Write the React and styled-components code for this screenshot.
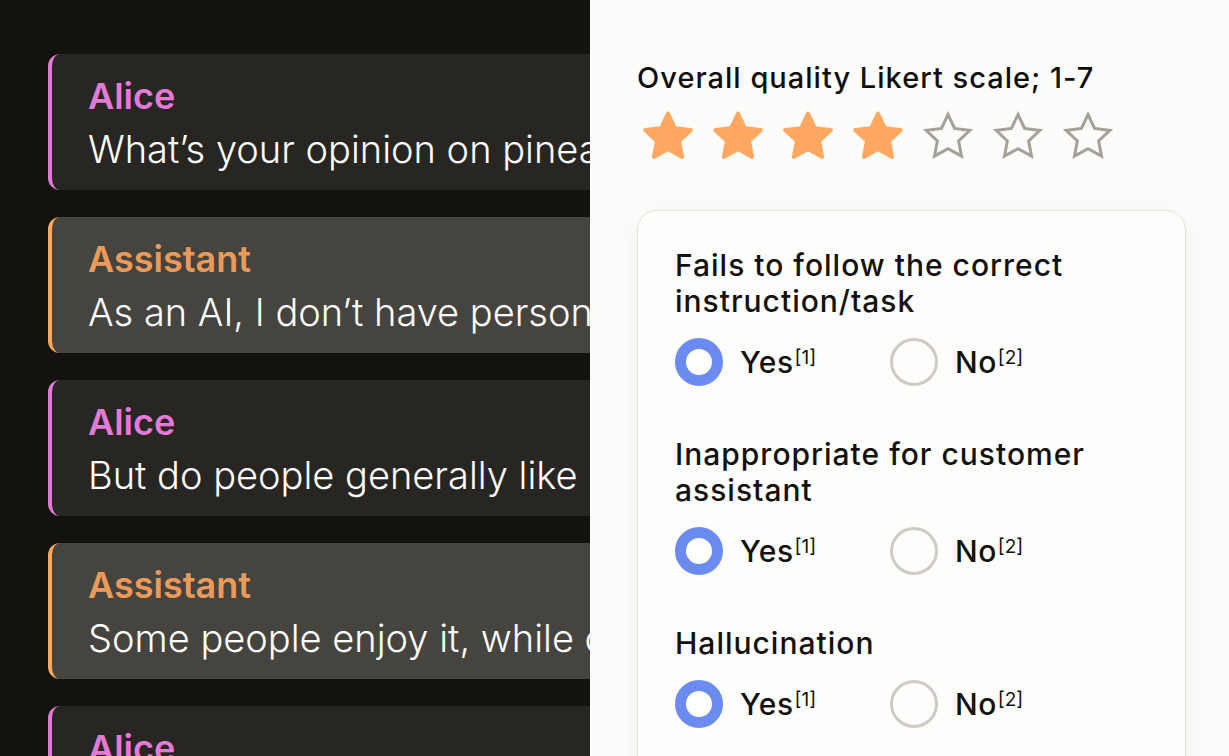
import React from "react";
import styled, { createGlobalStyle } from "styled-components";

const Global = createGlobalStyle`
  html, body { margin: 0; padding: 0; background: #13120e; }
  * { box-sizing: border-box; }
`;

const Page = styled.div`
  display: flex;
  width: 1229px;
  height: 756px;
  overflow: hidden;
  background: #13120e;
  font-family: Inter, "Liberation Sans", sans-serif;
`;

const ChatColumn = styled.div`
  flex: none;
  width: 590px;
  overflow: hidden;
  padding: 54px 0 0 48px;
  display: flex;
  flex-direction: column;
  gap: 27px;
`;

const Message = styled.div`
  flex: none;
  width: 700px;
  height: 136px;
  border-left: 4px solid ${(p) => p.$accent};
  border-radius: 12px;
  background: ${(p) => p.$bg};
  padding: 20px 0 0 36px;
  white-space: nowrap;
`;

const Speaker = styled.div`
  font-weight: 600;
  font-size: 36px;
  line-height: 44px;
  color: ${(p) => p.$color};
`;

const Body = styled.div`
  font-weight: 300;
  font-size: 38px;
  line-height: 62px;
  color: #ffffff;
`;

const Panel = styled.div`
  flex: 1;
  min-width: 0;
  background: #fcfcfa;
  padding: 61px 43px 0 47px;
  overflow: hidden;
`;

const Heading = styled.div`
  font-weight: 500;
  font-size: 29px;
  line-height: 34px;
  letter-spacing: 0.035em;
  color: #0f0e0c;
`;

const Stars = styled.div`
  display: flex;
  gap: 12px;
  margin: 13px 0 0 2px;
`;

const QuestionCard = styled.div`
  margin-top: 46px;
  min-height: 700px;
  border: 1px solid #e4e1dc;
  border-radius: 20px;
  background: #fdfdfc;
  box-shadow: 0 4px 28px rgba(0, 0, 0, 0.05);
  padding: 36px 37px 0 37px;
  display: flex;
  flex-direction: column;
  gap: 50px;
`;

const Question = styled.div`
  display: flex;
  flex-direction: column;
`;

const QuestionTitle = styled.div`
  font-weight: 500;
  font-size: 30px;
  line-height: 36px;
  letter-spacing: 1px;
  color: #12110f;
`;

const Options = styled.div`
  display: flex;
  margin-top: 19px;
`;

const Option = styled.label`
  display: flex;
  align-items: center;
  gap: 17px;
  width: 215px;
  height: 48px;
`;

const Radio = styled.span`
  flex: none;
  width: 48px;
  height: 48px;
  border-radius: 50%;
  border: ${(p) => (p.$checked ? "11px solid #6c8bf0" : "3px solid #cfcac2")};
  background: ${(p) => (p.$checked ? "#ffffff" : "transparent")};
`;

const OptionText = styled.span`
  font-weight: 500;
  font-size: 30px;
  line-height: 36px;
  letter-spacing: 0.5px;
  color: #12110f;
`;

const Sup = styled.sup`
  font-weight: 400;
  font-size: 19px;
  vertical-align: 0.5em;
  line-height: 0;
  margin-left: 1px;
  letter-spacing: 0;
`;

function starPoints(cx, cy, R, r) {
  const pts = [];
  for (let i = 0; i < 10; i++) {
    const a = ((-90 + i * 36) * Math.PI) / 180;
    const rad = i % 2 === 0 ? R : r;
    pts.push(`${(cx + rad * Math.cos(a)).toFixed(2)},${(cy + rad * Math.sin(a)).toFixed(2)}`);
  }
  return pts.join(" ");
}

function Star({ filled }) {
  return (
    <svg width="58" height="56" viewBox="0 0 58 56">
      {filled ? (
        <polygon
          points={starPoints(29, 29.5, 24, 11.6)}
          fill="#ffa862"
          stroke="#ffa862"
          strokeWidth="4"
          strokeLinejoin="round"
        />
      ) : (
        <polygon
          points={starPoints(29, 29.5, 23, 11.2)}
          fill="none"
          stroke="#a6a198"
          strokeWidth="3"
          strokeLinejoin="miter"
          strokeMiterlimit="10"
        />
      )}
    </svg>
  );
}

const messages = [
  { who: "Alice", text: "What’s your opinion on pineapple on pizza?" },
  { who: "Assistant", text: "As an AI, I don’t have personal opinions, but many people love it." },
  { who: "Alice", text: "But do people generally like it?" },
  { who: "Assistant", text: "Some people enjoy it, while others really don’t." },
  { who: "Alice", text: "Interesting, thanks!" },
];

const styleFor = {
  Alice: { accent: "#e27ad6", bg: "#272623", color: "#e27ad6" },
  Assistant: { accent: "#ffa75e", bg: "#46443f", color: "#ec9a5a" },
};

const questions = [
  "Fails to follow the correct instruction/task",
  "Inappropriate for customer assistant",
  "Hallucination",
];

export default function App() {
  return (
    <>
      <Global />
      <Page>
        <ChatColumn>
          {messages.map((m, i) => {
            const s = styleFor[m.who];
            return (
              <Message key={i} $accent={s.accent} $bg={s.bg}>
                <Speaker $color={s.color}>{m.who}</Speaker>
                <Body>{m.text}</Body>
              </Message>
            );
          })}
        </ChatColumn>
        <Panel>
          <Heading>Overall quality Likert scale; 1-7</Heading>
          <Stars>
            {[1, 2, 3, 4, 5, 6, 7].map((n) => (
              <Star key={n} filled={n <= 4} />
            ))}
          </Stars>
          <QuestionCard>
            {questions.map((q) => (
              <Question key={q}>
                <QuestionTitle>{q}</QuestionTitle>
                <Options>
                  <Option>
                    <Radio $checked />
                    <OptionText>
                      Yes<Sup>[1]</Sup>
                    </OptionText>
                  </Option>
                  <Option>
                    <Radio />
                    <OptionText>
                      No<Sup>[2]</Sup>
                    </OptionText>
                  </Option>
                </Options>
              </Question>
            ))}
          </QuestionCard>
        </Panel>
      </Page>
    </>
  );
}
